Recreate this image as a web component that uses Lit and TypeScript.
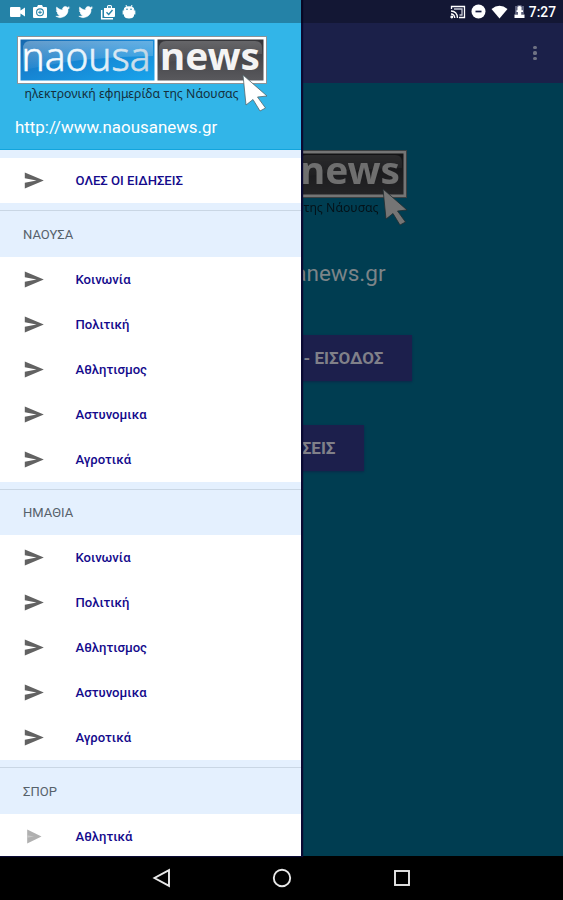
import { LitElement, html, css, svg, nothing } from "lit";
import { customElement } from "lit/decorators.js";

@customElement("naousa-logo")
class NaousaLogo extends LitElement {
  static properties = { partial: { type: Boolean } };
  declare partial: boolean;
  static styles = css`
    :host { display: block; width: 254px; height: 80px; }
    svg { display: block; overflow: visible; }
    .word { font-family: "Noto Sans", "Open Sans", sans-serif; }
  `;
  render() {
    return html`<svg width="254" height="80" viewBox="0 0 254 80">
      <defs>
        <linearGradient id="blue" x1="0" y1="0" x2="1" y2="1">
          <stop offset="0" stop-color="#1768ae" /><stop offset=".45" stop-color="#1684d2" /><stop offset="1" stop-color="#18a5ec" />
        </linearGradient>
        <linearGradient id="shine" x1="0" y1="0" x2="0" y2="1">
          <stop offset="0" stop-color="#fff" stop-opacity=".34" /><stop offset="1" stop-color="#fff" stop-opacity=".04" />
        </linearGradient>
        <linearGradient id="gloss" x1="0" y1="0" x2="0" y2="1">
          <stop offset="0" stop-color="#fff" stop-opacity=".24" /><stop offset="1" stop-color="#fff" stop-opacity="0" />
        </linearGradient>
        <linearGradient id="grey" x1="0" y1="0" x2="0" y2="1">
          <stop offset="0" stop-color="#343438" /><stop offset=".5" stop-color="#48484c" /><stop offset="1" stop-color="#59595d" />
        </linearGradient>
        <linearGradient id="letters" x1="0" y1="0" x2="1" y2="0">
          <stop offset="0" stop-color="#fff" /><stop offset=".6" stop-color="#e4f1fa" /><stop offset="1" stop-color="#c2d6e4" />
        </linearGradient>
      </defs>
      <rect x=".5" y=".5" width="249" height="47" fill="#fff" stroke="#8c9398" />
      <rect x="3.5" y="3.5" width="134" height="41" fill="url(#blue)" />
      <path d="M6 13 Q6 5 13 5H136V20Q70 20 6 34Z" fill="url(#shine)" />
      <rect x="140.5" y="3.5" width="106" height="41" fill="url(#grey)" />
      <path d="M142 13 Q142 5 149 5H238Q245 5 245 12V18Q190 18 142 28Z" fill="url(#gloss)" />
      ${this.partial ? nothing : svg`<text class="word" x="4.5" y="34.5" font-size="40" font-weight="300" textLength="129" lengthAdjust="spacingAndGlyphs" fill="url(#letters)" stroke="url(#letters)" stroke-width=".6">naousa</text>`}
      <text class="word" x="143" y="34" font-size="37.5" font-weight="700" textLength="100" lengthAdjust="spacingAndGlyphs" fill="#f4f4f4">news</text>
      <text class="word" x="7.5" y="61.5" font-size="12.5" textLength="214" lengthAdjust="spacingAndGlyphs" fill="#14303e">ηλεκτρονική εφημερίδα της Νάουσας</text>
      <path d="M226 39L250 60L240.5 61L248.5 72L243 75L236 63.5L229 69Z" fill="#fff" stroke="#53686f" stroke-width=".8" />
    </svg>`;
  }
}

@customElement("nav-row")
class NavRow extends LitElement {
  static properties = { label: { type: String }, faded: { type: Boolean } };
  declare label: string;
  declare faded: boolean;
  static styles = css`
    :host { display: flex; align-items: center; height: 45px; background: #fff; padding-left: 24px; box-sizing: border-box; }
    svg { width: 20px; height: 17px; flex: none; margin-right: 31.5px; }
    .label { font: 500 13.1px Roboto, "Noto Sans", sans-serif; color: #140a8c; white-space: nowrap; }
  `;
  render() {
    return html`<svg viewBox="0 0 20 17">${this.faded
        ? svg`<path d="M3.2 1.5L17.5 8.5L3.2 15.5Z" fill="#b0b0b0"/><path d="M3.2 7.2L10 8.5L3.2 9.8Z" fill="#c8c8c8"/>`
        : svg`<path d="M.8 .5L19.8 8.5L.8 16.5V10.8L12.5 8.5L.8 6.2Z" fill="#626262"/>`}</svg
      ><span class="label">${this.label}</span>`;
  }
}

const TOPICS = ["Κοινωνία", "Πολιτική", "Αθλητισμος", "Αστυνομικα", "Αγροτικά"];
const SECTIONS = [
  { title: "ΝΑΟΥΣΑ", items: TOPICS },
  { title: "ΗΜΑΘΙΑ", items: TOPICS },
  { title: "ΣΠΟΡ", items: ["Αθλητικά"] },
];

@customElement("app-root")
class AppRoot extends LitElement {
  static styles = css`
    :host { display: block; position: relative; width: 563px; height: 900px; overflow: hidden; background: #000; font-family: Roboto, "Noto Sans", sans-serif; }
    .screen { height: 856px; background: #003d51; display: flex; flex-direction: column; }
    .appbar { height: 83px; background: #1b2049; box-sizing: border-box; padding: 23px 26.5px 0 0; display: flex; justify-content: flex-end; align-items: center; flex: none; }
    .more { display: grid; gap: 2.7px; }
    .more i { width: 3.2px; height: 3.2px; border-radius: 50%; background: #6f7283; }
    .content { display: flex; flex-direction: column; align-items: center; padding-top: 67px; }
    .dim { filter: brightness(.46) contrast(1.05); margin-left: 4px; }
    .site { color: #7c8488; font-size: 22.5px; line-height: 28px; margin-top: 29px; }
    .btn { background: #1c1f4c; color: #808089; font-weight: 700; font-size: 17px; height: 46px; box-sizing: border-box; padding-right: 28px; display: flex; align-items: center; justify-content: flex-end; white-space: nowrap; box-shadow: 0 1px 2px #0a284a; }
    .enter { width: 260px; margin-top: 48px; }
    .news { width: 164px; margin-top: 44px; }
    .drawer { position: absolute; left: 0; top: 0; width: 301px; height: 856px; overflow: hidden; background: #e4f0fe; box-shadow: 1px 0 1px 1px #0a0a33; }
    .head { height: 150px; box-sizing: border-box; background: #32b5e8; border-bottom: 1px solid #12a5dd; padding: 36px 0 0 16.5px; }
    .url { color: #fff; font-size: 16.9px; line-height: 20px; margin: 1px 0 0 -1.5px; }
    .all { display: block; margin-top: 8px; }
    nav-row { display: flex; }
    .section { height: 53.6px; box-sizing: border-box; padding-top: 7px; }
    .title { border-top: 1px solid #c9d6e4; height: 46px; box-sizing: border-box; padding: 1px 0 0 23px; display: flex; align-items: center; font-size: 13px; color: #56616b; }
    .status { position: absolute; left: 0; top: 0; width: 563px; height: 23px; background: rgba(0, 0, 0, .28); display: flex; align-items: center; box-sizing: border-box; padding: 0 7px 0 9px; }
    .status svg { display: block; flex: none; }
    .left, .right { display: flex; align-items: center; }
    .left { gap: 6px; flex: 1; }
    .right { gap: 5px; }
    .clock { color: #fff; font-size: 13.8px; font-weight: 500; margin-left: -2px; }
    .nav { height: 44px; display: flex; justify-content: center; align-items: center; gap: 100px; }
    .nav svg { width: 20px; height: 20px; display: block; fill: none; stroke: #e8e8e8; stroke-width: 1.9; }
  `;

  bird() {
    return html`<svg width="17" height="16" viewBox="0 0 24 24" fill="#fff"><path d="M22.5 5.7c-.8.3-1.6.6-2.4.7.9-.5 1.5-1.3 1.8-2.3-.8.5-1.7.8-2.6 1a4.2 4.2 0 0 0-7.2 3.8C8.6 8.7 5.5 7 3.4 4.5c-1.1 1.9-.6 4.4 1.3 5.6-.7 0-1.3-.2-1.9-.5 0 2 1.4 3.8 3.3 4.2-.6.2-1.2.2-1.9.1.5 1.7 2.1 2.900 3.900 2.900A8.400 8.400 0 0 1 2 18.500 11.800 11.800 0 0 0 20.300 7.900c.9-.6 1.600-1.300 2.200-2.200z" stroke="#fff" stroke-width=".8"/></svg>`;
  }

  render() {
    return html`
      <div class="screen">
        <div class="appbar"><div class="more"><i></i><i></i><i></i></div></div>
        <div class="content">
          <naousa-logo class="dim" partial></naousa-logo>
          <div class="site">www.naousanews.gr</div>
          <div class="btn enter">ΑΡΧΙΚΗ - ΕΙΣΟΔΟΣ</div>
          <div class="btn news">ΕΙΔΗΣΕΙΣ</div>
        </div>
      </div>
      <div class="nav">
        <svg viewBox="0 0 20 20"><path d="M17 2.2V17.8L2.5 10Z"/></svg>
        <svg viewBox="0 0 20 20"><circle cx="10" cy="10" r="8.2"/></svg>
        <svg viewBox="0 0 20 20"><rect x="3" y="3" width="14" height="14"/></svg>
      </div>
      <div class="drawer">
        <div class="head">
          <naousa-logo></naousa-logo>
          <div class="url">http://www.naousanews.gr</div>
        </div>
        <div class="all"><nav-row label="ΟΛΕΣ ΟΙ ΕΙΔΗΣΕΙΣ"></nav-row></div>
        ${SECTIONS.map((s) => html`
          <div class="section"><div class="title">${s.title}</div></div>
          ${s.items.map((t) => html`<nav-row .label=${t} .faded=${s.items.length === 1}></nav-row>`)}
        `)}
      </div>
      <div class="status">
        <div class="left">
          <svg width="17" height="14" viewBox="0 0 17 14" fill="#fff"><path d="M2 2h8.5q1 0 1 1V5.5l4.5-3v9l-4.5-3V11q0 1-1 1H2q-1 0-1-1V3q0-1 1-1z"/></svg>
          <svg width="16" height="15" viewBox="0 0 16 15"><path d="M2 3h3l1-2h4l1 2h3q1 0 1 1v9q0 1-1 1H2q-1 0-1-1V4q0-1 1-1z" fill="#fff"/><circle cx="8" cy="8.3" r="3.4" fill="none" stroke="#2683a8" stroke-width="1.1"/><path d="M8 6.5v3.6M6.2 8.3h3.6" stroke="#2683a8"/></svg>
          ${this.bird()}${this.bird()}
          <svg width="16" height="16" viewBox="0 0 16 16"><path d="M4 4h3V2.5Q7 1 8.5 1h2Q12 1 12 2.5V4h3v8q0 1-1 1H5q-1 0-1-1z" fill="#fff"/><path d="M8 3.8h3V2.2H8z" fill="#2683a8"/><path d="M6.5 8.3l2.2 2.2L12.5 6" fill="none" stroke="#2683a8" stroke-width="1.4"/><path d="M1.7 6v8.7H13" fill="none" stroke="#fff" stroke-width="1.5"/></svg>
          <svg width="14" height="16" viewBox="0 0 14 16"><path d="M2 6.5Q2 3 5 2.5L3.8 1M12 6.5Q12 3 9 2.5L10.2 1" stroke="#fff" fill="none"/><path d="M2 6.7Q2.3 2.2 7 2.2T12 6.7V12Q11 14.5 7 14.5T2 12Z" fill="#fff"/><path d="M1.3 6.5v4M12.7 6.5v4" stroke="#fff" stroke-width="1.3"/><circle cx="5" cy="5.2" r=".8" fill="#2683a8"/><circle cx="9" cy="5.2" r=".8" fill="#2683a8"/></svg>
        </div>
        <div class="right">
          <svg width="16" height="14" viewBox="0 0 16 14" fill="none" stroke="#fff" stroke-width="1.3"><path d="M1.5 4V1.5h13v11H9M1 6q6 0 6.5 7M1 9q3.3 0 3.8 4"/><circle cx="1.8" cy="12" r=".8"/><path d="M4 4h8v6H9.5" stroke="#c5c7d2"/></svg>
          <svg width="15" height="15" viewBox="0 0 15 15"><circle cx="7.5" cy="7.5" r="7" fill="#fff"/><path d="M4.5 7.5h6" stroke="#13193f" stroke-width="1.7"/></svg>
          <svg width="17" height="14" viewBox="0 0 17 14"><path d="M.5 4Q8.5-2.5 16.5 4L8.5 13.5Z" fill="#fff"/></svg>
          <svg width="13" height="15" viewBox="0 0 13 15"><path d="M4.5 1h4v1H11v8H2V2h2.5z" fill="#5b5f7b"/><path d="M4.5 3Q6.5 1 8.5 3V6.2H10V8H8.2V10.5H11.5V14H1.5V10.5H5V8H3.5V6.2H4.5Z" fill="#fff"/></svg>
          <span class="clock">7:27</span>
        </div>
      </div>`;
  }
}
